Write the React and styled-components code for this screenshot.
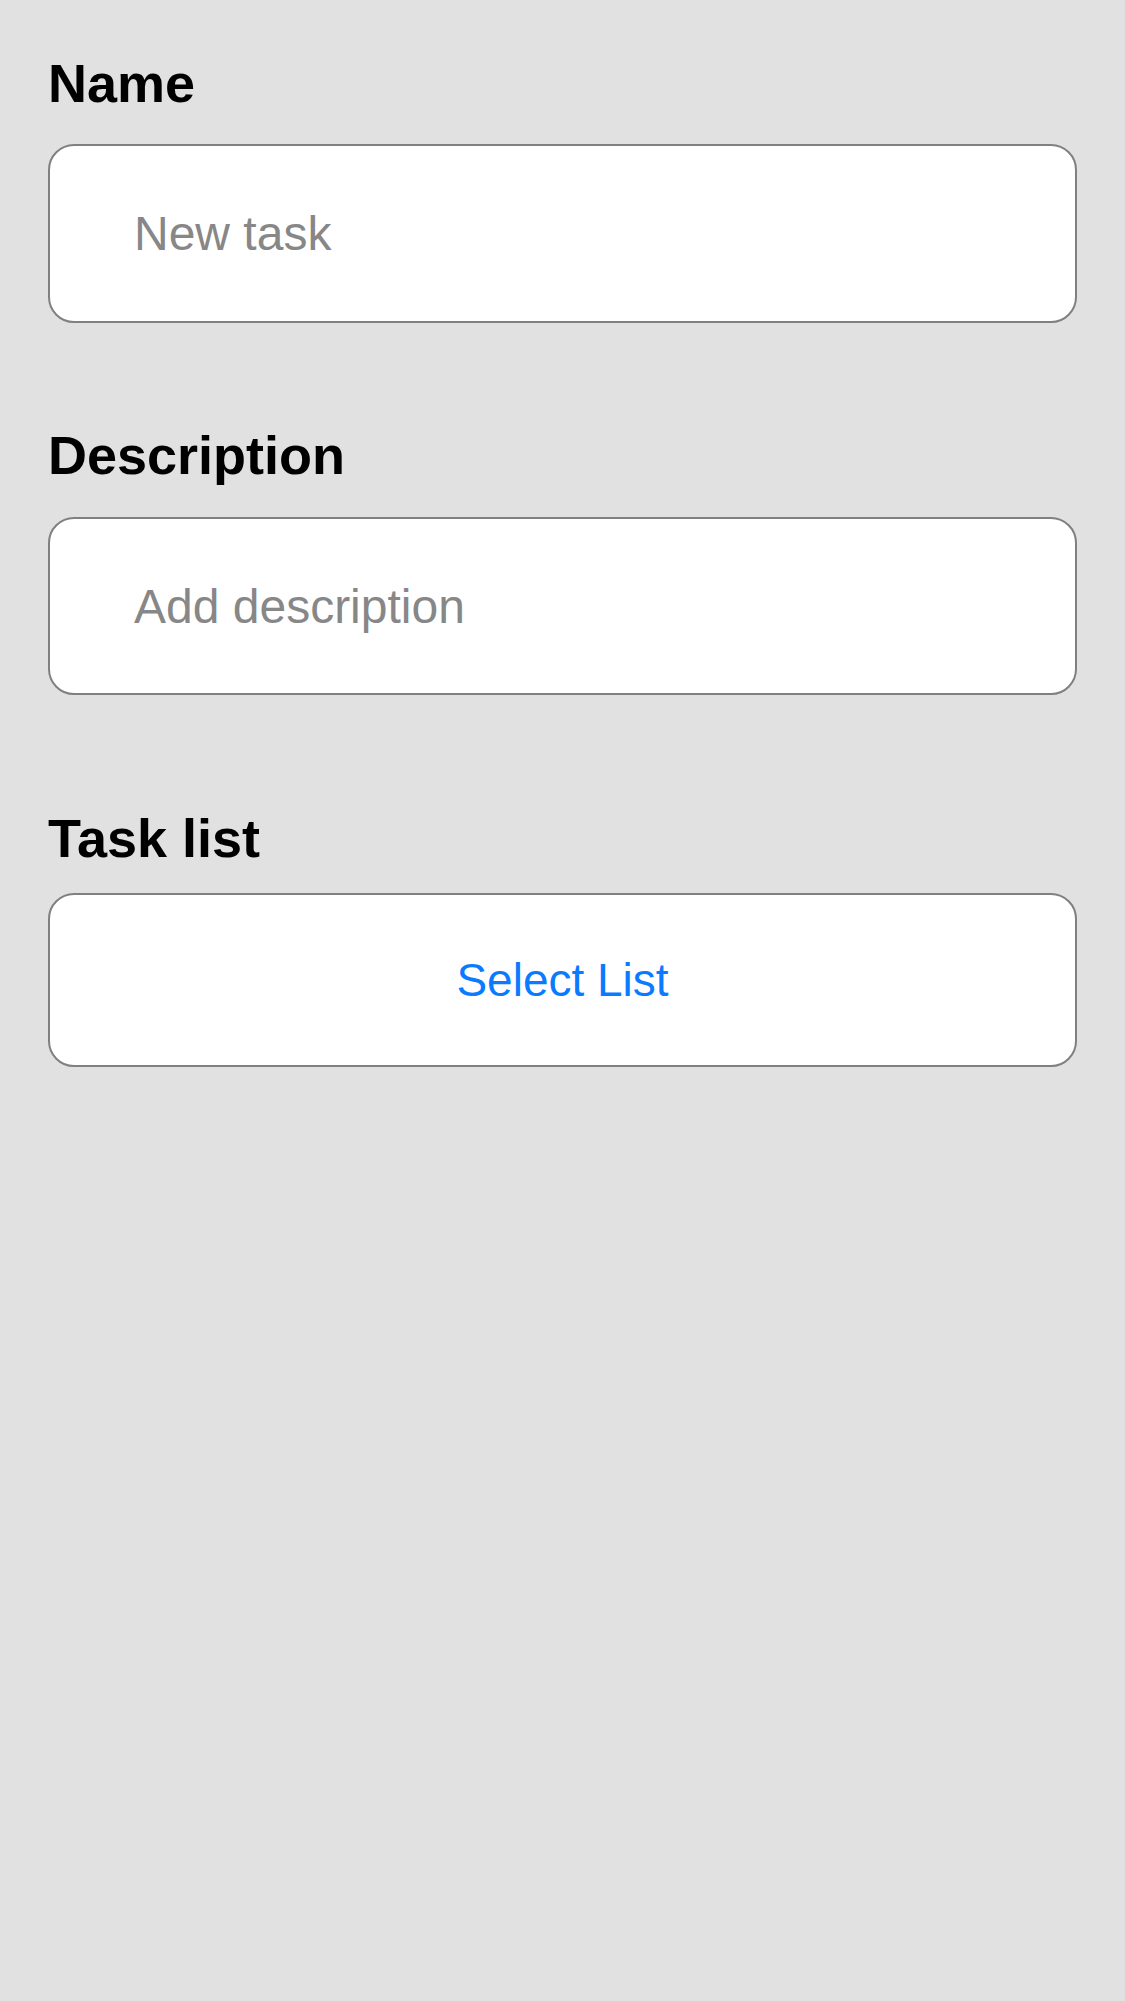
import styled, { createGlobalStyle } from "styled-components";

const GlobalStyle = createGlobalStyle`
  html, body {
    margin: 0;
    padding: 0;
    background: #e1e1e1;
  }
  body {
    font-family: "Liberation Sans", Arial, sans-serif;
  }
`;

const Page = styled.main`
  min-height: 2001px;
  box-sizing: border-box;
  padding: 56px 48px 0;
  display: flex;
  flex-direction: column;
  background: #e1e1e1;
`;

const Field = styled.section`
  display: flex;
  flex-direction: column;
  gap: ${(p) => p.$gap}px;
  margin-top: ${(p) => p.$top}px;
`;

const Label = styled.label`
  font-size: 54px;
  line-height: 54px;
  font-weight: bold;
  color: #000;
`;

const TextInput = styled.input`
  box-sizing: border-box;
  width: 100%;
  height: ${(p) => p.$height}px;
  padding: 0 0 0 84px;
  border: 2px solid #808080;
  border-radius: 26px;
  background: #fff;
  font-family: "Liberation Sans", Arial, sans-serif;
  font-size: 48px;
  color: #000;
  outline: none;
  &::placeholder {
    color: #878787;
  }
`;

const SelectButton = styled.button`
  box-sizing: border-box;
  width: 100%;
  height: 174px;
  border: 2px solid #808080;
  border-radius: 26px;
  background: #fff;
  font-family: "Liberation Sans", Arial, sans-serif;
  font-size: 46px;
  color: #0a7aff;
  display: flex;
  align-items: center;
  justify-content: center;
  cursor: pointer;
`;

function App() {
  return (
    <>
      <GlobalStyle />
      <Page>
        <Field $top={0} $gap={34}>
          <Label htmlFor="name">Name</Label>
          <TextInput id="name" $height={179} placeholder="New task" />
        </Field>
        <Field $top={105} $gap={35}>
          <Label htmlFor="description">Description</Label>
          <TextInput id="description" $height={178} placeholder="Add description" />
        </Field>
        <Field $top={116} $gap={28}>
          <Label>Task list</Label>
          <SelectButton type="button">Select List</SelectButton>
        </Field>
      </Page>
    </>
  );
}

export default App;
